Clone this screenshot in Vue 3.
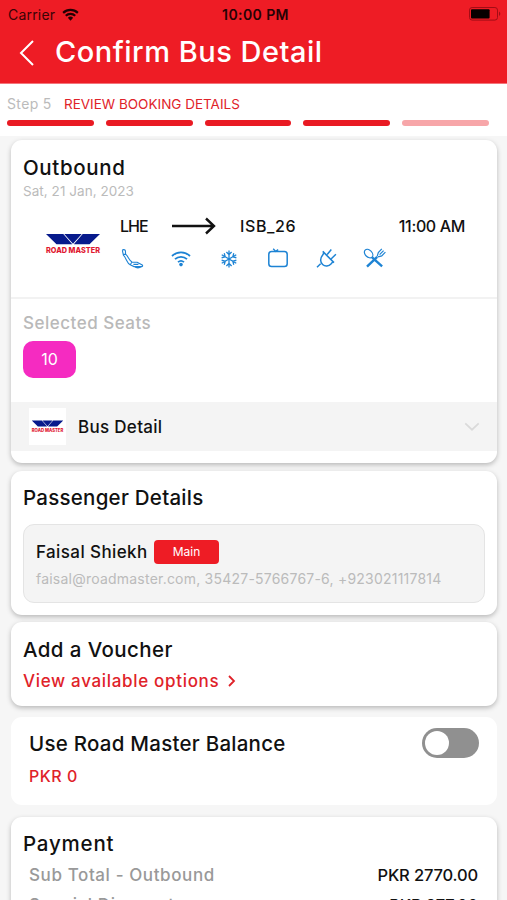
<script setup>
const steps = [true, true, true, true, false]
const charges = [
  { label: 'Sub Total - Outbound', amount: 'PKR 2770.00', kind: 'subtotal' },
  { label: 'Special Discount', amount: 'PKR 277.00', kind: 'discount' },
]
</script>

<template>
  <div class="screen">
    <header class="header">
      <div class="status">
        <div class="carrier">
          <span class="carrier-name">Carrier</span>
          <svg class="status-wifi" viewBox="0 0 18 13">
            <path d="M1.2 4.8a11.3 11.3 0 0 1 15.6 0M4 7.8a7.2 7.2 0 0 1 10 0" fill="none" stroke="currentColor" stroke-width="2.3" />
            <path d="M6.2 10a4 4 0 0 1 5.6 0L9 13z" fill="currentColor" />
          </svg>
        </div>
        <span class="clock">10:00 PM</span>
        <svg class="battery" viewBox="0 0 32 14">
          <rect x=".5" y=".5" width="28" height="12.6" rx="2.6" fill="none" stroke="#a20d15" />
          <rect x="2" y="2.2" width="18.6" height="9.2" rx="1" fill="#080000" />
          <path d="M30 4.6c1.8.8 1.8 3.6 0 4.4z" fill="#a20d15" />
        </svg>
      </div>
      <div class="nav">
        <svg class="back" viewBox="0 0 16 26">
          <path d="M14 1 2 13l12 12" fill="none" stroke="#fff" stroke-width="2" />
        </svg>
        <h1>Confirm Bus Detail</h1>
      </div>
    </header>

    <section class="progress">
      <div class="step-text">
        <span class="step-number">Step 5</span>
        <span class="step-name">REVIEW BOOKING DETAILS</span>
      </div>
      <div class="bars">
        <i v-for="(done, i) in steps" :key="i" :class="{ pending: !done }"></i>
      </div>
    </section>

    <main>
      <section class="card outbound">
        <h2 class="t-outbound">Outbound</h2>
        <p class="date">Sat, 21 Jan, 2023</p>
        <div class="trip">
          <svg class="logo" viewBox="0 0 56 24">
            <path d="M1 1h17.3l9 10.3H11.5zM19.3 1h17.4L28 10.8zM37.7 1H55L44.5 11.3H28.8z" fill="#071a8c" />
            <text x="1" y="20.2" textLength="54" lengthAdjust="spacingAndGlyphs">ROAD MASTER</text>
          </svg>
          <div class="trip-info">
            <div class="route">
              <span class="from">LHE</span>
              <svg class="arrow" viewBox="0 0 44 18">
                <path d="M0 9h42M34 1.5 42 9l-8 7.5" fill="none" stroke="#111" stroke-width="2.4" />
              </svg>
              <span class="to">ISB_26</span>
              <span class="time">11:00 AM</span>
            </div>
            <div class="amenities">
              <svg viewBox="0 0 24 22">
                <path d="M2.4 2.6c.2-1.4 2.8-1.2 3 .2l.2 3.4c3 2.6 3.6 6.6 6.4 7.8M2.4 2.6l1 4.6c3.2 3.4 3.4 8 6.8 9.6M3.2 6.4h2.4M12 14l5.2.2 5 2.8c.8.8.4 1.6-.6 1.6H14l-3.8-1.8zM14.4 18.6c2 1.6 5 1.4 7.6 0M13.4 16.4h5" stroke-width="1.1" />
              </svg>
              <svg viewBox="0 0 24 22">
                <path d="M3 8a13 13 0 0 1 18 0M6 11.2a8.7 8.7 0 0 1 12 0M9 14.2a4.5 4.5 0 0 1 6 0" stroke-width="1.8" />
                <circle cx="12" cy="16.6" r="1.8" class="solid" />
              </svg>
              <svg viewBox="0 0 24 22">
                <g v-for="angle in [0, 60, 120]" :key="angle" :transform="`rotate(${angle} 12 11)`">
                  <path d="M12 2.6v16.8M9.4 4 12 6.6 14.6 4M9.4 18l2.6-2.6 2.6 2.6" stroke-width="1.3" />
                </g>
              </svg>
              <svg viewBox="0 0 24 22">
                <rect x="2.8" y="3.6" width="18.4" height="15" rx="2.8" stroke-width="1.5" />
                <path d="m7.2.8 2.5 2.6L12.2 1.6" stroke-width="1.4" />
              </svg>
              <svg viewBox="0 0 24 22">
                <path d="M3 19.2 6.6 15.8M10 4.6l9 9-1.8 2.2c-2.4 2.7-6.2 3-8.6.7s-2.7-6.2-.2-9zM8.7 3.4 20 14.6M13.2 6.6l4.1-5M17.3 10.8l4.6-4.5" stroke-width="1.5" />
              </svg>
              <svg viewBox="0 0 24 22">
                <ellipse cx="5.6" cy="5.6" rx="3.4" ry="4.9" transform="rotate(-45 5.6 5.6)" />
                <path d="m14.2 8.4 1.1-3.9 3.5-3.6M22.4 4.2l-3.7 3.7-3.7 1M16.6 6.6l4-4" />
                <path d="m9.1 9.4 10 9M14.2 8.8 4 18.6" stroke-width="2.4" />
              </svg>
            </div>
          </div>
        </div>
        <div class="seats">
          <p class="seats-label">Selected Seats</p>
          <span class="seat">10</span>
        </div>
        <div class="bus">
          <span class="bus-thumb">
            <svg class="logo" viewBox="0 0 56 24">
              <path d="M1 1h17.3l9 10.3H11.5zM19.3 1h17.4L28 10.8zM37.7 1H55L44.5 11.3H28.8z" fill="#071a8c" />
              <text x="1" y="20.2" textLength="54" lengthAdjust="spacingAndGlyphs">ROAD MASTER</text>
            </svg>
          </span>
          <span class="bus-label">Bus Detail</span>
          <svg class="chevron" viewBox="0 0 16 10">
            <path d="m1.3 1.3 6.7 6.4 6.7-6.4" fill="none" stroke="#dadada" stroke-width="1.7" />
          </svg>
        </div>
      </section>

      <section class="card passengers">
        <h2 class="t-passenger">Passenger Details</h2>
        <div class="passenger">
          <div class="person">
            <span class="name">Faisal Shiekh</span>
            <span class="badge">Main</span>
          </div>
          <p class="contact">faisal@roadmaster.com, 35427-5766767-6, +923021117814</p>
        </div>
      </section>

      <section class="card voucher">
        <h2 class="t-voucher">Add a Voucher</h2>
        <div class="options">
          <span>View available options</span>
          <svg viewBox="0 0 8 12">
            <path d="m1 1 5 5-5 5" fill="none" stroke="#df2229" stroke-width="1.8" />
          </svg>
        </div>
      </section>

      <section class="card balance">
        <div class="balance-row">
          <h2 class="t-balance">Use Road Master Balance</h2>
          <span class="toggle"></span>
        </div>
        <p class="balance-value">PKR 0</p>
      </section>

      <section class="card payment">
        <h2 class="t-payment">Payment</h2>
        <div v-for="charge in charges" :key="charge.label" class="charge" :class="charge.kind">
          <span class="charge-label">{{ charge.label }}</span>
          <span class="charge-amount">{{ charge.amount }}</span>
        </div>
      </section>
    </main>
  </div>
</template>

<style>
body {
  margin: 0;
}
</style>

<style scoped>
* {
  box-sizing: border-box;
}
.screen {
  height: 900px;
  overflow: hidden;
  background: #f6f6f6;
  color: #111;
  font-family: Inter, "Liberation Sans", sans-serif;
  white-space: nowrap;
}
svg {
  display: block;
  flex: none;
}
h1,
h2,
p {
  margin: 0;
}
h2 {
  height: 30px;
  font-size: 20.5px;
  font-weight: 500;
  letter-spacing: 0.25px;
  line-height: 31px;
}
.t-outbound {
  letter-spacing: 0.65px;
}
.t-voucher {
  letter-spacing: 0.4px;
}
.t-payment {
  letter-spacing: 0.8px;
}
.header {
  height: 84px;
  background: #ee1c25;
  border-bottom: 1px solid #f4747a;
}
.status {
  display: grid;
  grid-template-columns: 1fr auto 1fr;
  align-items: center;
  height: 28px;
  padding: 0 6px 0 10px;
  color: #3a0306;
}
.carrier {
  display: flex;
  align-items: center;
  gap: 7px;
  margin-left: -2px;
}
.carrier-name {
  font-size: 14px;
  letter-spacing: 0.2px;
}
.status-wifi {
  width: 17px;
  height: 13px;
  color: #210103;
}
.clock {
  color: #250204;
  font-size: 14px;
  font-weight: 600;
  letter-spacing: 0.4px;
}
.battery {
  width: 32px;
  height: 14px;
  justify-self: end;
}
.nav {
  display: flex;
  align-items: center;
  gap: 20px;
  height: 48px;
  padding-left: 19px;
}
.back {
  width: 16px;
  height: 26px;
  margin-top: 2px;
}
h1 {
  color: #fff;
  font-size: 29px;
  font-weight: 500;
  letter-spacing: 0.5px;
  line-height: 48px;
}
.progress {
  height: 52px;
  padding: 10px 18px 0 7px;
  background: #fff;
}
.step-text {
  display: flex;
  gap: 12px;
  height: 20px;
  font-size: 13.5px;
  line-height: 20px;
}
.step-number {
  width: 45px;
  color: #bbb;
  font-size: 14px;
  letter-spacing: 0.35px;
}
.step-name {
  color: #df2229;
}
.bars {
  display: grid;
  grid-template-columns: repeat(5, 1fr);
  gap: 11.8px;
  padding-top: 6px;
}
.bars i {
  height: 6px;
  border-radius: 3px;
  background: #e91a23;
}
.bars .pending {
  background: #f7a6a9;
}
main {
  padding: 4px 10px 0 11px;
}
.card {
  border-radius: 11px;
  background: #fff;
  box-shadow: 0 2px 5px rgba(0, 0, 0, 0.25);
}
.outbound {
  height: 323px;
  padding-top: 12px;
}
.outbound h2,
.date {
  padding-left: 12px;
}
.date {
  height: 18px;
  color: #bbb;
  font-size: 13.5px;
  letter-spacing: 0.05px;
  line-height: 18px;
}
.trip {
  display: flex;
  gap: 19px;
  height: 99px;
  padding: 14px 32px 0 34px;
  border-bottom: 2px solid #f2f2f2;
}
.trip .logo {
  width: 56px;
  height: 24px;
  margin-top: 19px;
}
.logo text {
  fill: #df1730;
  font-family: Inter, sans-serif;
  font-size: 7.6px;
  font-weight: 800;
}
.trip-info {
  flex: 1;
}
.route {
  display: flex;
  align-items: center;
  height: 24px;
  font-size: 16px;
  font-weight: 500;
}
.from {
  width: 52px;
  letter-spacing: -1px;
}
.arrow {
  width: 44px;
  height: 18px;
  margin-right: 24px;
}
.to {
  letter-spacing: 0.6px;
}
.time {
  margin-left: auto;
  letter-spacing: -0.35px;
}
.amenities {
  display: flex;
  gap: 24.5px;
  padding-top: 10px;
}
.amenities svg {
  width: 24px;
  height: 22px;
  fill: none;
  stroke: #1d83d4;
  stroke-width: 1.2;
}
.amenities .solid {
  fill: #1d83d4;
  stroke: none;
}
.seats {
  height: 103px;
  padding: 12px 12px 0;
}
.seats-label {
  height: 24px;
  color: #b9b9b9;
  font-size: 17px;
  font-weight: 500;
  letter-spacing: 0.5px;
  line-height: 24px;
}
.seat {
  display: block;
  width: 53px;
  height: 37px;
  margin-top: 6px;
  border-radius: 10px;
  background: #f52bc1;
  color: #fff;
  font-size: 16px;
  line-height: 37px;
  text-align: center;
}
.bus {
  display: flex;
  align-items: center;
  height: 49px;
  padding: 0 17px 0 18px;
  background: #f4f4f4;
}
.bus-thumb {
  display: flex;
  align-items: center;
  justify-content: center;
  width: 37px;
  height: 37px;
  background: #fff;
}
.bus-thumb .logo {
  width: 33px;
  height: 14px;
}
.bus-label {
  margin-left: 12px;
  font-size: 17px;
  font-weight: 500;
  letter-spacing: 0.3px;
}
.chevron {
  width: 16px;
  height: 10px;
  margin-left: auto;
}
.passengers {
  height: 144px;
  margin-top: 8px;
  padding: 11px 12px 0;
}
.passenger {
  height: 79px;
  margin-top: 12px;
  padding: 14px 12px 0;
  border: 1.5px solid #e4e4e4;
  border-radius: 11px;
  background: #f4f4f4;
}
.person {
  display: flex;
  align-items: center;
  height: 26px;
}
.name {
  width: 118px;
  font-size: 17px;
  font-weight: 500;
  letter-spacing: 0.4px;
  line-height: 26px;
}
.badge {
  width: 65px;
  height: 24px;
  border-radius: 4px;
  background: #ee1c25;
  color: #fff;
  font-size: 12px;
  line-height: 24px;
  text-align: center;
}
.contact {
  height: 26px;
  color: #bbb;
  font-size: 14px;
  letter-spacing: 0.22px;
  line-height: 27px;
}
.voucher {
  height: 84px;
  margin-top: 7px;
  padding: 12px 12px 0;
}
.options {
  display: flex;
  align-items: center;
  gap: 9px;
  height: 34px;
  color: #df2229;
  font-size: 17px;
  font-weight: 500;
  letter-spacing: 0.68px;
}
.options svg {
  width: 8px;
  height: 12px;
}
.balance {
  height: 88px;
  margin-top: 11px;
  padding: 11px 18px 0;
  box-shadow: none;
}
.balance-row {
  display: flex;
  align-items: center;
  justify-content: space-between;
}
.toggle {
  width: 57px;
  height: 30px;
  padding: 3px;
  border-radius: 15px;
  background: #909090;
}
.toggle::before {
  display: block;
  width: 24px;
  height: 24px;
  border-radius: 50%;
  background: #fff;
  content: "";
}
.balance-value {
  height: 36px;
  color: #df2229;
  font-size: 16px;
  font-weight: 500;
  letter-spacing: 0.5px;
  line-height: 36px;
}
.payment {
  height: 130px;
  margin-top: 12px;
  padding: 11px 19px 0 12px;
}
.charge {
  display: flex;
  align-items: center;
  justify-content: space-between;
  height: 26px;
  padding-left: 6px;
  font-size: 16.5px;
  font-weight: 500;
}
.charge.subtotal {
  height: 34px;
}
.charge-label {
  color: #999;
  font-size: 17px;
  letter-spacing: 0.6px;
}
.charge-amount {
  letter-spacing: -0.15px;
}
</style>
